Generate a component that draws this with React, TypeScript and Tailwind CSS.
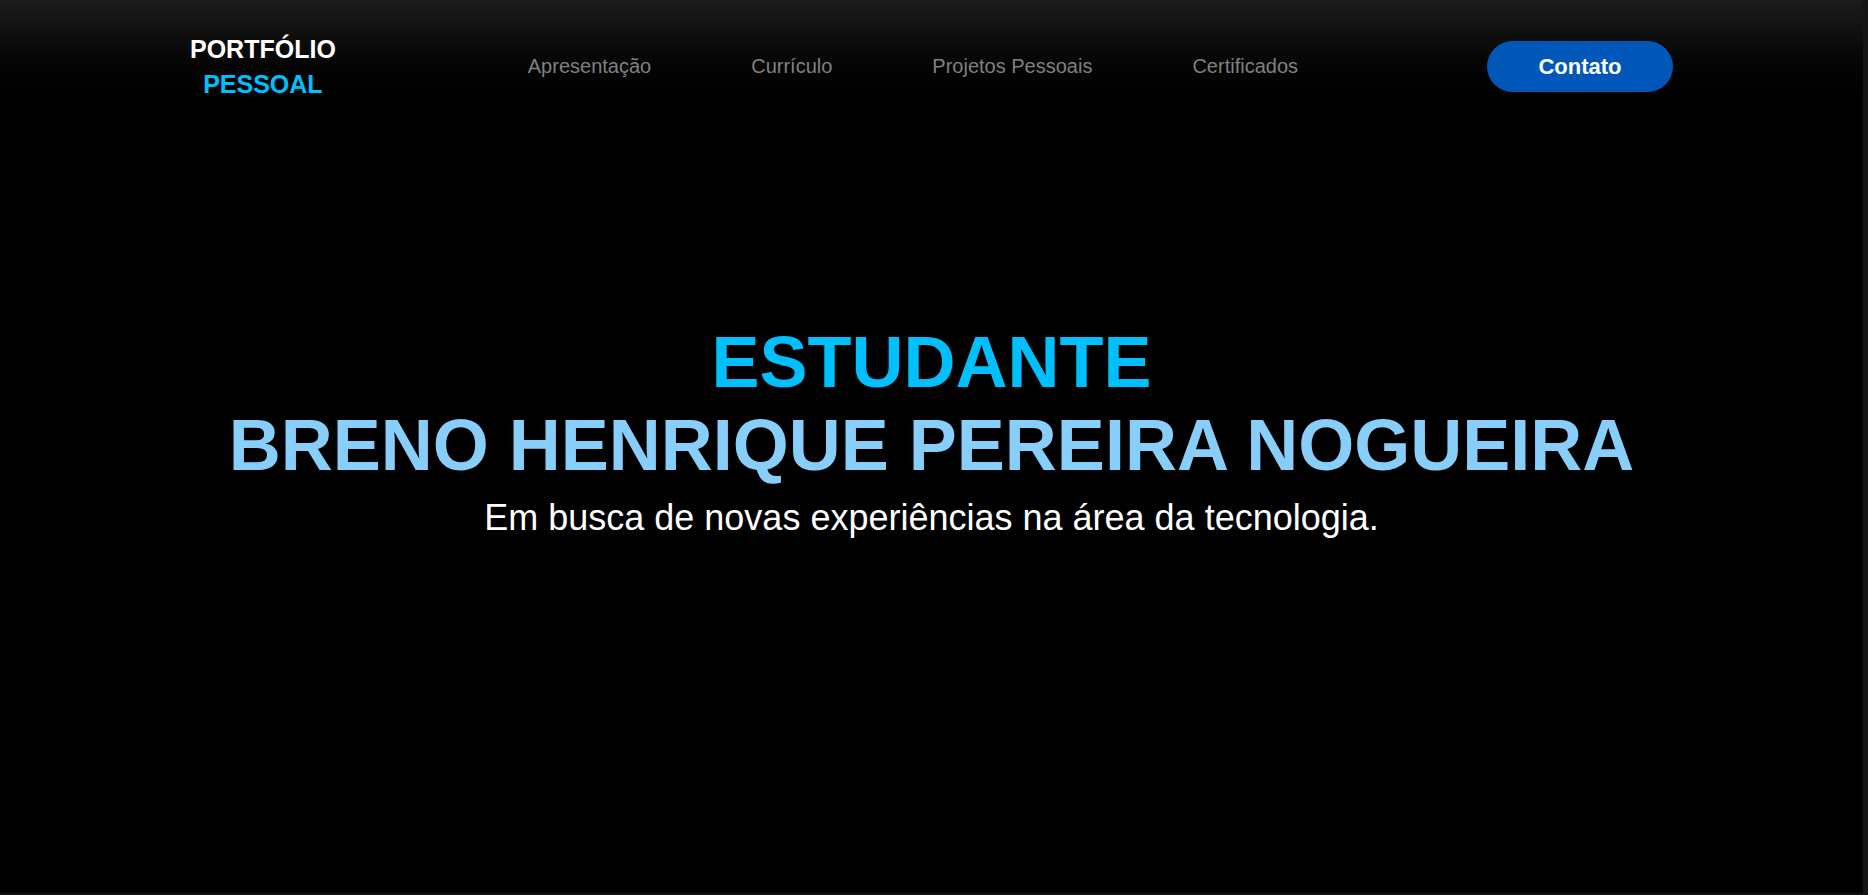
import React from "react";

export default function App() {
  const nav = ["Apresentação", "Currículo", "Projetos Pessoais", "Certificados"];
  return (
    <div className="flex h-[895px] w-full overflow-hidden bg-black font-['Liberation_Sans',Arial,sans-serif]">
      <div className="flex flex-1 flex-col">
        <header className="flex h-[133px] items-center justify-between bg-gradient-to-b from-[#1c1c1c] to-black pl-[190px] pr-[190px]">
          <div className="text-center text-[25px] font-bold leading-[35px]">
            <div className="text-white">PORTFÓLIO</div>
            <div className="text-[#00bfff]">PESSOAL</div>
          </div>
          <nav className="flex items-center gap-[100px] pl-[3px]">
            {nav.map((n) => (
              <a key={n} className="text-[20px] leading-[23px] text-[#808080]">
                {n}
              </a>
            ))}
          </nav>
          <button className="flex h-[51px] w-[186px] items-center justify-center rounded-full bg-[#0057b7] text-[22px] font-bold text-white">
            Contato
          </button>
        </header>
        <main className="flex flex-1 flex-col items-center pt-[188px] text-center">
          <h1 className="text-[72px] font-bold leading-[83px] text-[#00bfff]">ESTUDANTE</h1>
          <h2 className="text-[72px] font-bold leading-[83px] text-[#87cefa]">
            BRENO HENRIQUE PEREIRA NOGUEIRA
          </h2>
          <p className="mt-[10px] text-[36px] leading-[41px] text-white">
            Em busca de novas experiências na área da tecnologia.
          </p>
        </main>
        <div className="h-[2px] bg-[#0e0e0e]" />
      </div>
      <div className="w-[5px] bg-[#151515]" />
    </div>
  );
}
